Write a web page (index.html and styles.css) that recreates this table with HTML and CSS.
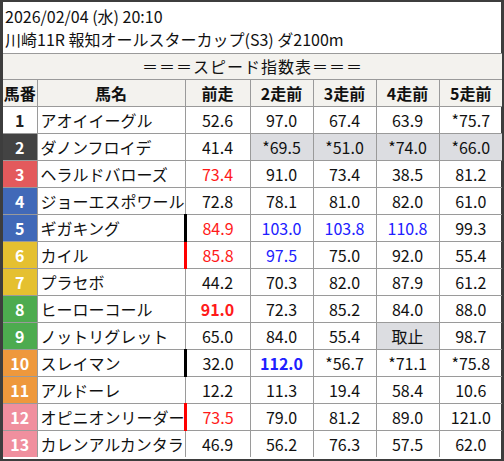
FILE: index.html
```html
<!DOCTYPE html>
<html lang="ja">
<head>
<meta charset="utf-8">
<link rel="stylesheet" href="styles.css">
</head>
<body>
<div class="frame">
  <div class="title">
    <div class="line">2026/02/04 (水) 20:10</div>
    <div class="line">川崎11R 報知オールスターカップ(S3) ダ2100m</div>
  </div>
  <table class="speed">
    <colgroup>
      <col class="c-no"><col class="c-name"><col class="c-prev"><col class="c-n"><col class="c-n"><col class="c-n"><col class="c-n">
    </colgroup>
    <thead>
      <tr class="caption"><th colspan="7">＝＝＝スピード指数表＝＝＝</th></tr>
      <tr class="head"><th>馬番</th><th>馬名</th><th>前走</th><th>2走前</th><th>3走前</th><th>4走前</th><th>5走前</th></tr>
    </thead>
    <tbody>
      <tr><td class="no w1">1</td><td class="name">アオイイーグル</td><td>52.6</td><td>97.0</td><td>67.4</td><td>63.9</td><td>*75.7</td></tr>
      <tr><td class="no w2">2</td><td class="name">ダノンフロイデ</td><td>41.4</td><td class="gray">*69.5</td><td class="gray">*51.0</td><td class="gray">*74.0</td><td class="gray">*66.0</td></tr>
      <tr><td class="no w3">3</td><td class="name">ヘラルドバローズ</td><td class="red">73.4</td><td>91.0</td><td>73.4</td><td>38.5</td><td>81.2</td></tr>
      <tr><td class="no w4">4</td><td class="name">ジョーエスポワール</td><td>72.8</td><td>78.1</td><td>81.0</td><td>82.0</td><td>61.0</td></tr>
      <tr><td class="no w4">5</td><td class="name">ギガキング</td><td class="red mark-black">84.9</td><td class="blue">103.0</td><td class="blue">103.8</td><td class="blue">110.8</td><td>99.3</td></tr>
      <tr><td class="no w5">6</td><td class="name">カイル</td><td class="red mark-red">85.8</td><td class="blue">97.5</td><td>75.0</td><td>92.0</td><td>55.4</td></tr>
      <tr><td class="no w5">7</td><td class="name">プラセボ</td><td>44.2</td><td>70.3</td><td>82.0</td><td>87.9</td><td>61.2</td></tr>
      <tr><td class="no w6">8</td><td class="name">ヒーローコール</td><td class="red bold">91.0</td><td>72.3</td><td>85.2</td><td>84.0</td><td>88.0</td></tr>
      <tr><td class="no w6">9</td><td class="name">ノットリグレット</td><td>65.0</td><td>84.0</td><td>55.4</td><td class="gray">取止</td><td>98.7</td></tr>
      <tr><td class="no w7">10</td><td class="name">スレイマン</td><td class="mark-black">32.0</td><td class="blue bold">112.0</td><td>*56.7</td><td>*71.1</td><td>*75.8</td></tr>
      <tr><td class="no w7">11</td><td class="name">アルドーレ</td><td>12.2</td><td>11.3</td><td>19.4</td><td>58.4</td><td>10.6</td></tr>
      <tr><td class="no w8">12</td><td class="name">オピニオンリーダー</td><td class="red mark-red">73.5</td><td>79.0</td><td>81.2</td><td>89.0</td><td>121.0</td></tr>
      <tr><td class="no w8">13</td><td class="name">カレンアルカンタラ</td><td>46.9</td><td>56.2</td><td>76.3</td><td>57.5</td><td>62.0</td></tr>
    </tbody>
  </table>
</div>
</body>
</html>
```
FILE: styles.css
```css
html, body {
  margin: 0;
  padding: 0;
  background: #ffffff;
}
body {
  font-family: "Noto Sans CJK JP", "Noto Sans", sans-serif;
  color: #111111;
  width: 504px;
  height: 461px;
  overflow: hidden;
}
.frame {
  box-sizing: border-box;
  width: 504px;
  height: 461px;
  border-style: solid;
  border-color: #3d3d3d;
  border-width: 2px 3px 2px 3px;
  background: #ffffff;
}
.title {
  padding: 3px 2px 2px 2px;
  height: 46px;
  box-sizing: content-box;
}
.title .line {
  font-size: 16px;
  line-height: 23px;
  white-space: nowrap;
}
.speed {
  width: 498px;
  border-collapse: collapse;
  table-layout: fixed;
  font-size: 16px;
}
.c-no { width: 34px; }
.c-name { width: 148px; }
.c-prev { width: 65px; }
.c-n { width: 63px; }
.speed th,
.speed td {
  border: 1px solid #9a9a9a;
  padding: 0;
  text-align: center;
  white-space: nowrap;
  overflow: hidden;
}
.speed tr > :first-child { border-left: none; }
.speed tr > :last-child { border-right: none; }
.speed tbody tr:last-child td { border-bottom: none; }
.caption th {
  background: #f3f2ee;
  font-weight: normal;
  height: 25px;
  line-height: 25px;
  font-size: 16px;
  letter-spacing: 1px;
}
.head th {
  background: #f3f2ee;
  font-weight: bold;
  height: 26px;
  line-height: 26px;
}
.speed tbody td {
  height: 26px;
  line-height: 26px;
}
.speed td.name {
  text-align: left;
  padding-left: 3px;
}
.speed td.no {
  font-weight: bold;
  color: #ffffff;
}
.w1 { background: #ffffff; color: #222222 !important; }
.w2 { background: #434343; }
.w3 { background: #e35a5c; }
.w4 { background: #4169b8; }
.w5 { background: #e5c030; }
.w6 { background: #4dab4f; }
.w7 { background: #ee983c; }
.w8 { background: #f08f9e; }
.gray { background: #dcdde1; }
.red { color: #ff1a1a; }
.blue { color: #2020ff; }
.bold { font-weight: bold; }
.speed td.mark-black { border-left: 3px solid #000000; }
.speed td.mark-red { border-left: 3px solid #ff0000; }
```
